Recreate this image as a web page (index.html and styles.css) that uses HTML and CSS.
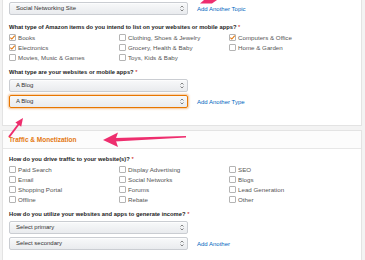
FILE: index.html
```html
<!DOCTYPE html>
<html lang="en">
  <head>
    <meta charset="UTF-8" />
    <meta name="viewport" content="width=device-width, initial-scale=1.0" />
    <title>Website and Mobile App List</title>
    <link rel="stylesheet" href="styles.css">
  </head>
  <body>
    <div class="page">
      <div class="card card-top">
        <div class="select-row">
          <div class="select">Social Networking Site<svg class="caret" width="4" height="7" viewBox="0 0 4 7"><path d="M0.5 2.5 L2 1 L3.5 2.5 M0.5 4.5 L2 6 L3.5 4.5" fill="none" stroke="#666" stroke-width="0.8"/></svg></div>
          <a class="add-link" href="#">Add Another Topic</a>
        </div>

        <div class="question">What type of Amazon items do you intend to list on your websites or mobile apps? <span class="req">*</span></div>
        <div class="checks">
          <label class="check"><span class="box on"><svg width="7" height="7" viewBox="0 0 7 7"><path d="M1.3 3.6 L2.8 5 L5.8 1.6" fill="none" stroke="#e47911" stroke-width="1.1"/></svg></span>Books</label>
          <label class="check"><span class="box"></span>Clothing, Shoes &amp; Jewelry</label>
          <label class="check"><span class="box on"><svg width="7" height="7" viewBox="0 0 7 7"><path d="M1.3 3.6 L2.8 5 L5.8 1.6" fill="none" stroke="#e47911" stroke-width="1.1"/></svg></span>Computers &amp; Office</label>
          <label class="check"><span class="box on"><svg width="7" height="7" viewBox="0 0 7 7"><path d="M1.3 3.6 L2.8 5 L5.8 1.6" fill="none" stroke="#e47911" stroke-width="1.1"/></svg></span>Electronics</label>
          <label class="check"><span class="box"></span>Grocery, Health &amp; Baby</label>
          <label class="check"><span class="box"></span>Home &amp; Garden</label>
          <label class="check"><span class="box"></span>Movies, Music &amp; Games</label>
          <label class="check"><span class="box"></span>Toys, Kids &amp; Baby</label>
        </div>

        <div class="question">What type are your websites or mobile apps? <span class="req">*</span></div>
        <div class="select-row first">
          <div class="select">A Blog<svg class="caret" width="4" height="7" viewBox="0 0 4 7"><path d="M0.5 2.5 L2 1 L3.5 2.5 M0.5 4.5 L2 6 L3.5 4.5" fill="none" stroke="#666" stroke-width="0.8"/></svg></div>
        </div>
        <div class="select-row next">
          <div class="select focus">A Blog<svg class="caret" width="4" height="7" viewBox="0 0 4 7"><path d="M0.5 2.5 L2 1 L3.5 2.5 M0.5 4.5 L2 6 L3.5 4.5" fill="none" stroke="#666" stroke-width="0.8"/></svg></div>
          <a class="add-link" href="#">Add Another Type</a>
        </div>
      </div>

      <div class="card card-bottom">
        <div class="card-header">Traffic &amp; Monetization</div>
        <div class="card-body">
          <div class="question">How do you drive traffic to your website(s)? <span class="req">*</span></div>
          <div class="checks">
            <label class="check"><span class="box"></span>Paid Search</label>
            <label class="check"><span class="box"></span>Display Advertising</label>
            <label class="check"><span class="box"></span>SEO</label>
            <label class="check"><span class="box"></span>Email</label>
            <label class="check"><span class="box"></span>Social Networks</label>
            <label class="check"><span class="box"></span>Blogs</label>
            <label class="check"><span class="box"></span>Shopping Portal</label>
            <label class="check"><span class="box"></span>Forums</label>
            <label class="check"><span class="box"></span>Lead Generation</label>
            <label class="check"><span class="box"></span>Offline</label>
            <label class="check"><span class="box"></span>Rebate</label>
            <label class="check"><span class="box"></span>Other</label>
          </div>

          <div class="question">How do you utilize your websites and apps to generate income? <span class="req">*</span></div>
          <div class="select-row first">
            <div class="select">Select primary<svg class="caret" width="4" height="7" viewBox="0 0 4 7"><path d="M0.5 2.5 L2 1 L3.5 2.5 M0.5 4.5 L2 6 L3.5 4.5" fill="none" stroke="#666" stroke-width="0.8"/></svg></div>
          </div>
          <div class="select-row next">
            <div class="select">Select secondary<svg class="caret" width="4" height="7" viewBox="0 0 4 7"><path d="M0.5 2.5 L2 1 L3.5 2.5 M0.5 4.5 L2 6 L3.5 4.5" fill="none" stroke="#666" stroke-width="0.8"/></svg></div>
            <a class="add-link" href="#">Add Another</a>
          </div>
        </div>
      </div>

      <!-- annotation arrows drawn over the form -->
      <svg class="arrows" width="365" height="260" viewBox="0 0 365 260">
        <polygon points="200,3.5 204,0 217,0 212,3.5" fill="#ee2e6e"/>
        <line x1="9" y1="137" x2="18.8" y2="124" stroke="#ee2e6e" stroke-width="2"/>
        <polygon points="23,118 21.2,126.8 15.4,122.4" fill="#ee2e6e"/>
        <polygon points="115,138 186,136 186,137.6 115,141.4" fill="#ee2e6e"/>
        <polygon points="103,140 118,132.5 115.5,139.6 118,147" fill="#ee2e6e"/>
      </svg>
    </div>
  </body>
</html>
```

FILE: styles.css
```css
body {
  font-family: "Liberation Sans", Arial, sans-serif;
  margin: 0;
  padding: 0;
  background-color: #f3f3f3;
  color: #333;
  font-size: 6px;
}
.page {
  position: relative;
  width: 365px;
  height: 260px;
  overflow: hidden;
}
.card {
  margin: 0 3px 0 2px;
  background-color: #fff;
  border: 1px solid #e3e3e3;
}
.card-top {
  border-top: none;
  padding: 2px 0 17px 6px;
}
.card-bottom {
  margin-top: 4px;
  height: 200px;
}
.card-header {
  height: 17px;
  line-height: 17px;
  padding-left: 6px;
  background-color: #fcfcfc;
  border-bottom: 1px solid #e7e7e7;
  color: #e47911;
  font-weight: bold;
  font-size: 6.5px;
}
.card-body {
  padding-left: 6px;
}
.select-row {
  display: flex;
  align-items: center;
}
.select-row.first {
  margin-top: 2px;
}
.select-row.next {
  margin-top: 3px;
}
.select {
  position: relative;
  width: 179px;
  height: 13px;
  line-height: 11px;
  box-sizing: border-box;
  padding-left: 6px;
  border: 1px solid #cacdd2;
  border-radius: 2px;
  background: linear-gradient(#f8f9fa, #e9ebee);
  color: #333;
  box-shadow: 0 1px 0 rgba(255, 255, 255, 0.6) inset;
}
.select.focus {
  border-color: #e77600;
  box-shadow: 0 0 2px 1px rgba(228, 121, 17, 0.45);
}
.caret {
  position: absolute;
  right: 3px;
  top: 2px;
}
.add-link {
  margin-left: 9px;
  color: #0066c0;
  text-decoration: none;
}
.question {
  margin-top: 5px;
  line-height: 10px;
  font-size: 5.8px;
  font-weight: bold;
  color: #222;
  white-space: nowrap;
}
.card-top .select-row + .question {
  margin-top: 7px;
}
.req {
  color: #c40000;
  font-weight: normal;
}
.checks {
  display: grid;
  grid-template-columns: 110px 110px 1fr;
}
.check {
  display: flex;
  align-items: center;
  height: 10px;
  font-size: 6.2px;
  color: #555;
  white-space: nowrap;
}
.box {
  width: 7px;
  height: 7px;
  box-sizing: border-box;
  border: 1px solid #b4b4b4;
  border-radius: 1px;
  margin-right: 2px;
  background-color: #fff;
  position: relative;
}
.box svg {
  position: absolute;
  left: -1px;
  top: -1px;
}
.arrows {
  position: absolute;
  left: 0;
  top: 0;
  pointer-events: none;
}
```
